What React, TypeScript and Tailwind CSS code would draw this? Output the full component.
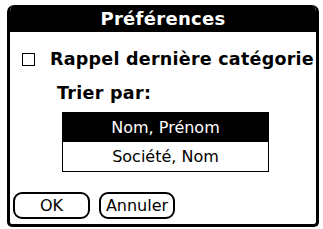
export default function App() {
  return (
    <div className="w-[323px] h-[229px] bg-white pt-[5px] pl-[7px] font-['DejaVu_Sans',sans-serif] text-black">
      <div className="w-[312px] h-[222px] border-[3px] border-t-0 border-black rounded-t-[7px] rounded-b-[5px] overflow-hidden flex flex-col">
        {/* title bar */}
        <div className="h-[27px] bg-black text-white font-bold text-[18px] leading-[27px] text-center tracking-[0.3px]">
          Préférences
        </div>

        {/* remember category */}
        <div className="flex items-center mt-[17px] pl-[12px]">
          <div className="w-[13px] h-[13px] border-[1.5px] border-black" />
          <span className="ml-[15px] font-bold text-[17.5px] leading-[20px] tracking-[0.25px]">Rappel dernière catégorie</span>
        </div>

        {/* sort by */}
        <div className="mt-[14px] pl-[47px] font-bold text-[17.5px] leading-[20px] tracking-[0.3px]">Trier par:</div>

        <div className="ml-[52px] mt-[9px] w-[207px] border border-black text-[16px]">
          <div className="h-[29px] bg-black text-white flex items-center justify-center">Nom, Prénom</div>
          <div className="h-[29px] flex items-center justify-center">Société, Nom</div>
        </div>

        {/* buttons */}
        <div className="flex gap-[9px] mt-auto mb-[5px] pl-[3px]">
          <button className="w-[77px] h-[27px] border-2 border-black rounded-[9px] text-[16px] leading-none">OK</button>
          <button className="w-[76px] h-[27px] border-2 border-black rounded-[9px] text-[16px] leading-none">Annuler</button>
        </div>
      </div>
    </div>
  )
}
